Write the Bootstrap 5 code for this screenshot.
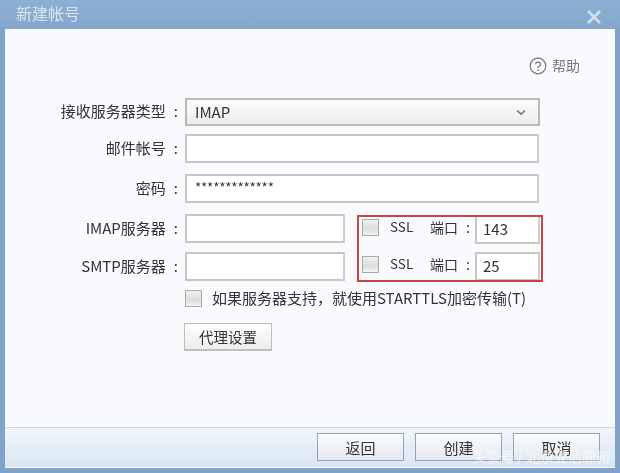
<!DOCTYPE html>
<html lang="zh">
<head>
<meta charset="utf-8">
<title>新建帐号</title>
<link rel="stylesheet" href="https://cdn.jsdelivr.net/npm/bootstrap@5.3.0/dist/css/bootstrap.min.css">
<style>
html,body{margin:0;height:473px;overflow:hidden}
body{font-family:"Noto Sans CJK SC","Liberation Sans",sans-serif;font-size:15px;color:#3a3a3a;background:#86a8cd}
.dlg{width:620px;height:473px;background:#7fa3cb;filter:blur(.3px)}
.titlebar{height:29px;padding:0 0 3px 16px;background:linear-gradient(#8fb0d4,#83a6cd);color:#dde6f0;font-size:16px}
.closex{width:16px;height:16px;margin-right:18px;margin-top:8px}
.dbody{margin:0 5px;height:439px;background:#f8fafd}
.main{height:398px;position:relative}
.helpline{padding:20px 35px 0 0;color:#777;font-size:14px;line-height:33px;height:69px}
.helpline svg{margin-right:5px}
.lbl{width:173px;text-align:right;white-space:nowrap;line-height:1;color:#333;padding-bottom:3px}
.colon{margin-left:8px}
.fld{margin-left:7px;border:2px solid #c6c6c6;border-right-color:#cfcfcf;background:#fff;height:29px;box-sizing:border-box;padding:0 8px;line-height:24px;color:#333}
.w354{width:354px}
.w160{width:160px}
.stars{font-size:13.5px;letter-spacing:-.25px;padding-top:1px;padding-bottom:3px;line-height:20px}
.sel{width:355px;height:28px;margin-left:7px;border:2px solid #b9b9b9;background:linear-gradient(#fbfbfb,#ededed);padding:0 8px;line-height:24px;box-sizing:border-box;color:#333}
.r1{margin-bottom:8px}
.r2{margin-bottom:11px}
.r3{margin-bottom:11px}
.dualwrap{position:relative}
.r4{margin-bottom:9px}
.r5{margin-bottom:0}
.cb{width:17px;height:17px;border:1px solid #a9a9a9;background:linear-gradient(#f0f0f0,#dcdcdc 60%,#f4f4f4);flex:none;box-sizing:border-box}
.portframe{position:absolute;left:352px;top:1px;width:186px;height:67px;border:2px solid #c94444;pointer-events:none}
.ssl{position:absolute;left:385px;line-height:1;font-size:13.5px;white-space:nowrap;color:#333}
.portlbl{position:absolute;left:425px;line-height:1;font-size:14px;white-space:nowrap;color:#333}
.cbabs{position:absolute;left:357px}
.port{position:absolute;left:470px;width:65px;margin:0;padding-left:6px}
.top-port1{top:5px}.top-port2{top:42px}
.sl1{top:6px}.sl2{top:43px}
.p1{top:1px}.p2{top:38px}
.startline{margin-left:180px;margin-top:8px;height:18px;font-size:15px;white-space:nowrap;color:#333}
.startline .cb{margin-right:10px}
.proxy{display:inline-block;margin-left:179px;margin-top:16px;width:88px;height:28px;line-height:25px;border:1px solid #bdbdbd;border-bottom-width:2px;background:linear-gradient(#fdfdfd,#ededed);text-align:center;color:#333;font-size:14.5px;padding:0;border-radius:0;box-sizing:border-box}
.foot{height:40px;background:linear-gradient(#f1f6fb,#d8e6f3);border-top:1px solid #cfd8e2;padding-right:15px;position:relative}
.fbtn{width:87px;height:28px;padding:0;border:1px solid #9aa3ad;border-radius:0;background:linear-gradient(#fbfcfd,#e3e9ef);color:#333;font-size:15px;line-height:25px;margin-left:11px;margin-top:5px}
.wm{position:absolute;right:5px;bottom:4px;color:#fff;opacity:.6;font-size:14px;line-height:1;white-space:nowrap}
</style>
</head>
<body>
<div class="dlg">
  <div class="titlebar d-flex justify-content-between align-items-center">
    <span>新建帐号</span>
    <svg class="closex" viewBox="0 0 16 16"><path d="M2 2L14 14M14 2L2 14" stroke="#d3e0ee" stroke-width="2.6" fill="none"/></svg>
  </div>
  <div class="dbody">
    <div class="main">
      <div class="helpline d-flex justify-content-end align-items-start">
        <svg width="18" height="18" viewBox="0 0 18 18" class="mt-2"><circle cx="9" cy="9" r="7.8" fill="none" stroke="#777" stroke-width="1.2"/><path d="M6.6 7.2a2.4 2.2 0 1 1 3.6 2c-.8.5-1.2.9-1.2 1.8" fill="none" stroke="#777" stroke-width="1.3"/><circle cx="9" cy="13.2" r=".9" fill="#777"/></svg>
        <span>帮助</span>
      </div>
      <div class="d-flex align-items-center r1"><div class="lbl">接收服务器类型<span class="colon">:</span></div>
        <div class="sel d-flex justify-content-between align-items-center"><span>IMAP</span>
          <svg width="10" height="7" viewBox="0 0 10 7" class="me-1"><path d="M1 1.5L5 5.2L9 1.5" stroke="#777" stroke-width="1.6" fill="none"/></svg></div></div>
      <div class="d-flex align-items-center r2"><div class="lbl">邮件帐号<span class="colon">:</span></div><div class="fld w354"></div></div>
      <div class="d-flex align-items-center r3"><div class="lbl">密码<span class="colon">:</span></div><div class="fld w354 stars">*************</div></div>
      <div class="dualwrap">
        <div class="d-flex align-items-center r4"><div class="lbl">IMAP服务器<span class="colon">:</span></div><div class="fld w160"></div></div>
        <div class="d-flex align-items-center r5"><div class="lbl">SMTP服务器<span class="colon">:</span></div><div class="fld w160"></div></div>
        <div class="cb cbabs top-port1"></div><div class="ssl sl1">SSL</div><div class="portlbl sl1">端口<span class="colon">:</span></div><div class="fld port p1">143</div>
        <div class="cb cbabs top-port2"></div><div class="ssl sl2">SSL</div><div class="portlbl sl2">端口<span class="colon">:</span></div><div class="fld port p2">25</div>
        <div class="portframe"></div>
      </div>
      <div class="startline d-flex align-items-center"><span class="cb"></span><span>如果服务器支持，就使用STARTTLS加密传输(T)</span></div>
      <button type="button" class="proxy">代理设置</button>
    </div>
    <div class="foot d-flex justify-content-end align-items-start">
      <button type="button" class="btn fbtn">返回</button>
      <button type="button" class="btn fbtn">创建</button>
      <button type="button" class="btn fbtn">取消</button>
      <span class="wm">头条号 / 北京亚信邮箱</span>
    </div>
  </div>
</div>
</body>
</html>
